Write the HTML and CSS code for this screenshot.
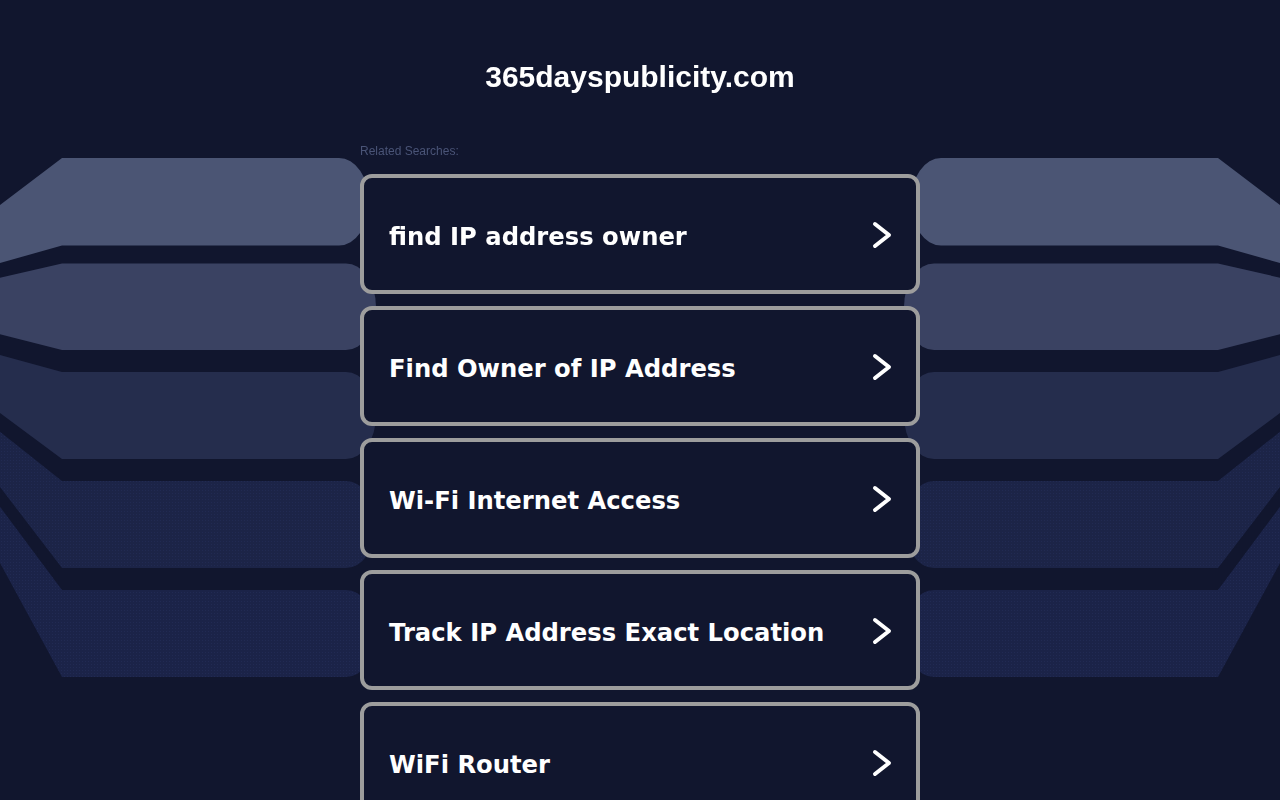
FILE: index.html
```html
<!DOCTYPE html>
<html lang="en">
<head>
<meta charset="utf-8">
<title>365dayspublicity.com</title>
<link rel="stylesheet" href="styles.css">
</head>
<body>
<svg class="backdrop" width="1280" height="800" viewBox="0 0 1280 800" aria-hidden="true">
  <defs>
    <pattern id="dots" width="3" height="3" patternUnits="userSpaceOnUse">
      <rect width="3" height="3" fill="#1c2447"/>
      <rect x="1" y="1" width="1" height="1" fill="#212a52"/>
    </pattern>
    <pattern id="dots2" width="3" height="3" patternUnits="userSpaceOnUse">
      <rect width="3" height="3" fill="#1b2348"/>
      <rect x="1" y="1" width="1" height="1" fill="#212a53"/>
    </pattern>
    <g id="bands">
      <path fill="#4b5574" d="M0,205 L62,158 L339,158 A30,43.75 0 0 1 369,201.75 A30,43.75 0 0 1 339,245.5 L62,245.5 L0,263 Z"/>
      <path fill="#3a4262" d="M0,277.7 L62,263.5 L346,263.5 A30,43.25 0 0 1 376,306.75 A30,43.25 0 0 1 346,350 L62,350 L0,334.3 Z"/>
      <path fill="#252d4d" d="M0,355 L62,372 L346,372 A30,43.5 0 0 1 376,415.5 A30,43.5 0 0 1 346,459 L62,459 L0,413 Z"/>
      <path fill="url(#dots)" d="M0,431.7 L62,481 L346,481 A30,43.5 0 0 1 376,524.5 A30,43.5 0 0 1 346,568 L62,568 L0,487 Z"/>
      <path fill="url(#dots2)" d="M0,506.7 L62,590 L346,590 A30,43.5 0 0 1 376,633.5 A30,43.5 0 0 1 346,677 L62,677 L0,563 Z"/>
    </g>
  </defs>
  <use href="#bands"/>
  <use href="#bands" transform="translate(1280,0) scale(-1,1)"/>
</svg>

<main class="page">
  <h1 class="domain">365dayspublicity.com</h1>
  <section class="related">
    <p class="related-label">Related Searches:</p>
    <ul class="links">
      <li><a class="link" href="#"><span>find IP address owner</span><svg class="chev" width="22" height="30" viewBox="0 0 22 30"><polyline points="4,4 18,15 4,26"/></svg></a></li>
      <li><a class="link" href="#"><span>Find Owner of IP Address</span><svg class="chev" width="22" height="30" viewBox="0 0 22 30"><polyline points="4,4 18,15 4,26"/></svg></a></li>
      <li><a class="link" href="#"><span>Wi-Fi Internet Access</span><svg class="chev" width="22" height="30" viewBox="0 0 22 30"><polyline points="4,4 18,15 4,26"/></svg></a></li>
      <li><a class="link" href="#"><span>Track IP Address Exact Location</span><svg class="chev" width="22" height="30" viewBox="0 0 22 30"><polyline points="4,4 18,15 4,26"/></svg></a></li>
      <li><a class="link" href="#"><span>WiFi Router</span><svg class="chev" width="22" height="30" viewBox="0 0 22 30"><polyline points="4,4 18,15 4,26"/></svg></a></li>
    </ul>
  </section>
</main>
</body>
</html>
```

FILE: styles.css
```css
html, body {
  margin: 0;
  padding: 0;
  height: 100%;
  overflow: hidden;
}

body {
  background: #11162e;
  font-family: "Liberation Sans", Arial, sans-serif;
  color: #ffffff;
}

.backdrop {
  position: fixed;
  left: 0;
  top: 0;
  z-index: 0;
}

.page {
  position: relative;
  z-index: 1;
  width: 560px;
  margin: 0 auto;
  padding-top: 59px;
}

.domain {
  margin: 0;
  height: 36px;
  font-size: 30px;
  line-height: 36px;
  font-weight: 700;
  text-align: center;
  color: #ffffff;
}

.related {
  margin-top: 48px;
}

.related-label {
  margin: 0;
  height: 16px;
  font-size: 12px;
  line-height: 16px;
  color: #4a5477;
}

.links {
  list-style: none;
  margin: 15px 0 0;
  padding: 0;
  display: flex;
  flex-direction: column;
  gap: 12px;
}

.link {
  box-sizing: border-box;
  height: 120px;
  display: flex;
  align-items: center;
  justify-content: space-between;
  padding: 4px 23px 0 25px;
  border: 4px solid #9d9d9d;
  border-radius: 12px;
  background: #11162e;
  color: #ffffff;
  text-decoration: none;
  font-family: "DejaVu Sans", Verdana, sans-serif;
  font-weight: 700;
  font-size: 24.25px;
}

.chev {
  flex: none;
  margin-bottom: 2px;
  fill: none;
  stroke: #ffffff;
  stroke-width: 4;
  stroke-linecap: round;
  stroke-linejoin: round;
}
```
